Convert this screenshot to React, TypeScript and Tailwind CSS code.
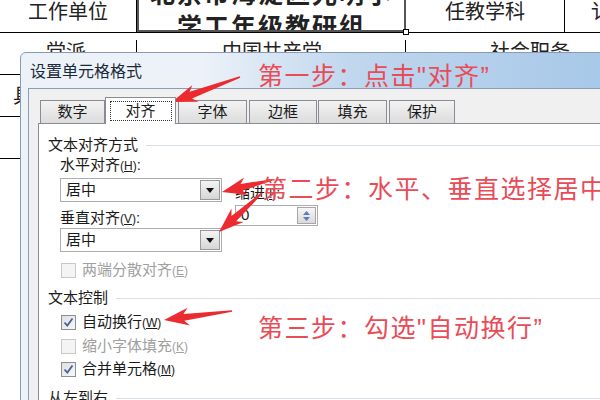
type Pt = [number, number]

// tapered red arrow, thin at the tail, swept-back barbs at the tip
function arrowPoints(tail: Pt, tip: Pt, head = 20, headW = 9, neckW = 3.5, tailW = 0.8) {
  const dx = tip[0] - tail[0]
  const dy = tip[1] - tail[1]
  const len = Math.hypot(dx, dy)
  const ux = dx / len
  const uy = dy / len
  const nx = -uy
  const ny = ux
  const bx = tip[0] - ux * head
  const by = tip[1] - uy * head
  const pts: Pt[] = [
    [tail[0] + nx * tailW, tail[1] + ny * tailW],
    [bx + nx * neckW, by + ny * neckW],
    [bx - ux * 5 + nx * headW, by - uy * 5 + ny * headW],
    tip,
    [bx - ux * 5 - nx * headW, by - uy * 5 - ny * headW],
    [bx - nx * neckW, by - ny * neckW],
    [tail[0] - nx * tailW, tail[1] - ny * tailW],
  ]
  return pts.map((p) => `${p[0].toFixed(1)},${p[1].toFixed(1)}`).join(' ')
}

const arrows: [Pt, Pt][] = [
  [[240, 77], [172, 102]],
  [[272, 180], [222, 192]],
  [[262, 193], [219, 232]],
  [[232, 311], [164, 320]],
]

function Key({ k }: { k: string }) {
  return (
    <span className="text-[12px]">
      (<u>{k}</u>)
    </span>
  )
}

function Check({ checked, disabled }: { checked?: boolean; disabled?: boolean }) {
  return (
    <span
      className={
        disabled
          ? 'flex h-[15px] w-[15px] shrink-0 border border-[#c9c9c9] bg-[#f4f4f4]'
          : 'flex h-[15px] w-[15px] shrink-0 items-center justify-center border border-[#8e8f8f] bg-gradient-to-br from-[#dcdfe4] to-[#f7f8f9]'
      }
    >
      {checked && (
        <svg width="11" height="11" viewBox="0 0 11 11">
          <path d="M1.5 5.5 L4.3 8.5 L9.5 1.5" fill="none" stroke="#4a5f97" strokeWidth="1.8" />
        </svg>
      )}
    </span>
  )
}

function Combo({ value }: { value: string }) {
  return (
    <div className="flex h-[24px] w-[162px] items-center justify-between border border-[#abadb3] bg-white pl-[5px] pr-[1px]">
      <span>{value}</span>
      <span className="flex h-[20px] w-[20px] items-center justify-center border border-[#9a9a9a] bg-gradient-to-b from-[#f4f4f4] to-[#d6d6d6]">
        <svg width="8" height="5" viewBox="0 0 8 5">
          <path d="M0 0 H8 L4 5 Z" fill="#111" />
        </svg>
      </span>
    </div>
  )
}

function Tab({ label, active, className }: { label: string; active?: boolean; className: string }) {
  return (
    <div
      className={
        active
          ? `relative z-10 -mb-px flex h-[27px] items-center justify-center border border-b-0 border-[#898c95] bg-white ${className}`
          : `flex h-[23px] items-center justify-center border border-b-0 border-[#898c95] bg-gradient-to-b from-[#f3f3f3] to-[#dcdcdc] ${className}`
      }
    >
      {active ? (
        <span className="flex h-[20px] w-[62px] items-center justify-center border border-dotted border-[#333]">{label}</span>
      ) : (
        label
      )}
    </div>
  )
}

function Group({ title }: { title: string }) {
  return (
    <div className="flex h-[20px] items-center">
      <span>{title}</span>
      <span className="ml-[8px] h-px flex-1 bg-[#d5dfe5]" />
    </div>
  )
}

export default function App() {
  return (
    <div className="relative h-[400px] w-[600px] overflow-hidden bg-white [font-family:'Liberation_Sans','Noto_Sans_CJK_SC',sans-serif] text-[#1a1a1a]">
      {/* word table behind the dialog */}
      <div className="text-[20px] text-[#222]">
        <div className="flex h-[33px] border-b border-black">
          <div className="w-[137px] shrink-0 border-r border-black text-center leading-[25px]">工作单位</div>
          <div className="relative w-[269px] shrink-0 overflow-hidden border-x-2 border-b-2 border-[#555]">
            <div className="-mt-[22px] whitespace-nowrap text-center text-[25px] font-bold leading-[33px] tracking-[2px]">
              北京市海淀区光明小
              <br />
              学工年级教研组
            </div>
          </div>
          <div className="w-[159px] shrink-0 border-r border-black text-center leading-[25px]">任教学科</div>
          <div className="pl-[26px] leading-[25px]">讠</div>
        </div>
        <div className="flex h-[42px] border-b border-black pt-[7px] leading-[25px]">
          <div className="w-[137px] shrink-0 border-r border-black pl-[46px]">党派</div>
          <div className="w-[269px] shrink-0 border-r border-black pl-[85px]">中国共产党</div>
          <div className="pl-[84px]">社会职务</div>
        </div>
        <div className="flex h-[42px] border-b border-black pl-[13px] pt-[9px] leading-[25px]">具</div>
        <div className="h-[42px] border-b border-black" />
      </div>
      <span className="absolute left-[403px] top-[29px] h-[6px] w-[6px] border border-black bg-white" />

      {/* dialog window */}
      <div className="absolute left-[20px] top-[52px] flex h-[360px] w-[600px] flex-col rounded-tl-[6px] border border-[#8a9bb0] bg-gradient-to-r from-[#edf2f8] from-30% via-[#c0d7ee] via-55% to-[#a6c7e8] text-[15px]">
        <div className="flex h-[35px] items-center pl-[9px] pt-[3px] text-[16px] text-[#1b2a3b]">设置单元格格式</div>
        <div className="flex flex-1 pl-[7px]">
          <div className="flex flex-1 flex-col border-l border-t border-[#8c9db3] bg-[#f0f0f0] pl-[9px] pt-[11px]">
            <div className="flex h-[23px] items-end pl-[2px]">
              <Tab label="数字" className="w-[65px]" />
              <Tab label="对齐" active className="w-[71px]" />
              <Tab label="字体" className="ml-[2px] w-[69px]" />
              <Tab label="边框" className="ml-[2px] w-[68px]" />
              <Tab label="填充" className="ml-[1px] w-[69px]" />
              <Tab label="保护" className="ml-[2px] w-[66px]" />
            </div>
            <div className="flex-1 border-l border-t border-[#898c95] bg-white pl-[9px] pt-[11px]">
              <Group title="文本对齐方式" />
              <div className="flex">
                <div className="ml-[12px] flex w-[162px] flex-col">
                  <div className="h-[20px] leading-[20px]">
                    水平对齐<Key k="H" />:
                  </div>
                  <div className="mt-[3px]">
                    <Combo value="居中" />
                  </div>
                  <div className="mt-[6px] h-[20px] leading-[20px]">
                    垂直对齐<Key k="V" />:
                  </div>
                  <Combo value="居中" />
                  <div className="mt-[8px] flex h-[20px] items-center gap-[6px] pl-[1px] text-[#a0a0a0]">
                    <Check disabled />
                    <span>
                      两端分散对齐<Key k="E" />
                    </span>
                  </div>
                </div>
                <div className="ml-[13px] flex flex-col">
                  <div className="mt-[28px] h-[20px] leading-[20px]">
                    缩进<Key k="I" />:
                  </div>
                  <div className="mt-[2px] flex h-[21px] w-[83px] items-center justify-between border border-[#abadb3] bg-white pl-[5px] pr-[1px]">
                    <span>0</span>
                    <span className="flex h-[17px] w-[19px] flex-col items-center justify-center gap-[2px] border border-[#a6a6a6] bg-gradient-to-b from-[#f6f6f6] to-[#dadada]">
                      <svg width="7" height="4" viewBox="0 0 7 4">
                        <path d="M0 4 H7 L3.5 0 Z" fill="#5a7dc4" />
                      </svg>
                      <svg width="7" height="4" viewBox="0 0 7 4">
                        <path d="M0 0 H7 L3.5 4 Z" fill="#5a7dc4" />
                      </svg>
                    </span>
                  </div>
                </div>
              </div>
              <div className="mt-[8px]">
                <Group title="文本控制" />
              </div>
              <div className="ml-[13px] mt-[4px] flex h-[20px] items-center gap-[6px]">
                <Check checked />
                <span>
                  自动换行<Key k="W" />
                </span>
              </div>
              <div className="ml-[13px] mt-[4px] flex h-[20px] items-center gap-[6px] text-[#a0a0a0]">
                <Check disabled />
                <span>
                  缩小字体填充<Key k="K" />
                </span>
              </div>
              <div className="ml-[13px] mt-[3px] flex h-[20px] items-center gap-[6px]">
                <Check checked />
                <span>
                  合并单元格<Key k="M" />
                </span>
              </div>
              <div className="mt-[9px]">
                <Group title="从左到右" />
              </div>
            </div>
          </div>
        </div>
      </div>

      {/* annotations */}
      <svg className="absolute left-0 top-0" width="600" height="400" viewBox="0 0 600 400">
        {arrows.map(([t, p], i) => (
          <polygon key={i} points={arrowPoints(t, p)} fill="#ec2b30" />
        ))}
      </svg>
      <div className="absolute left-[258px] top-[62px] whitespace-nowrap text-[25px] leading-[28px] tracking-[1.5px] text-[#e94b57]">
        第一步：点击"对齐”
      </div>
      <div className="absolute left-[262px] top-[175px] whitespace-nowrap text-[25px] leading-[28px] tracking-[1.5px] text-[#e94b57]">
        第二步：水平、垂直选择居中
      </div>
      <div className="absolute left-[258px] top-[314px] whitespace-nowrap text-[25px] leading-[28px] tracking-[1.5px] text-[#e94b57]">
        第三步：勾选"自动换行”
      </div>
    </div>
  )
}
